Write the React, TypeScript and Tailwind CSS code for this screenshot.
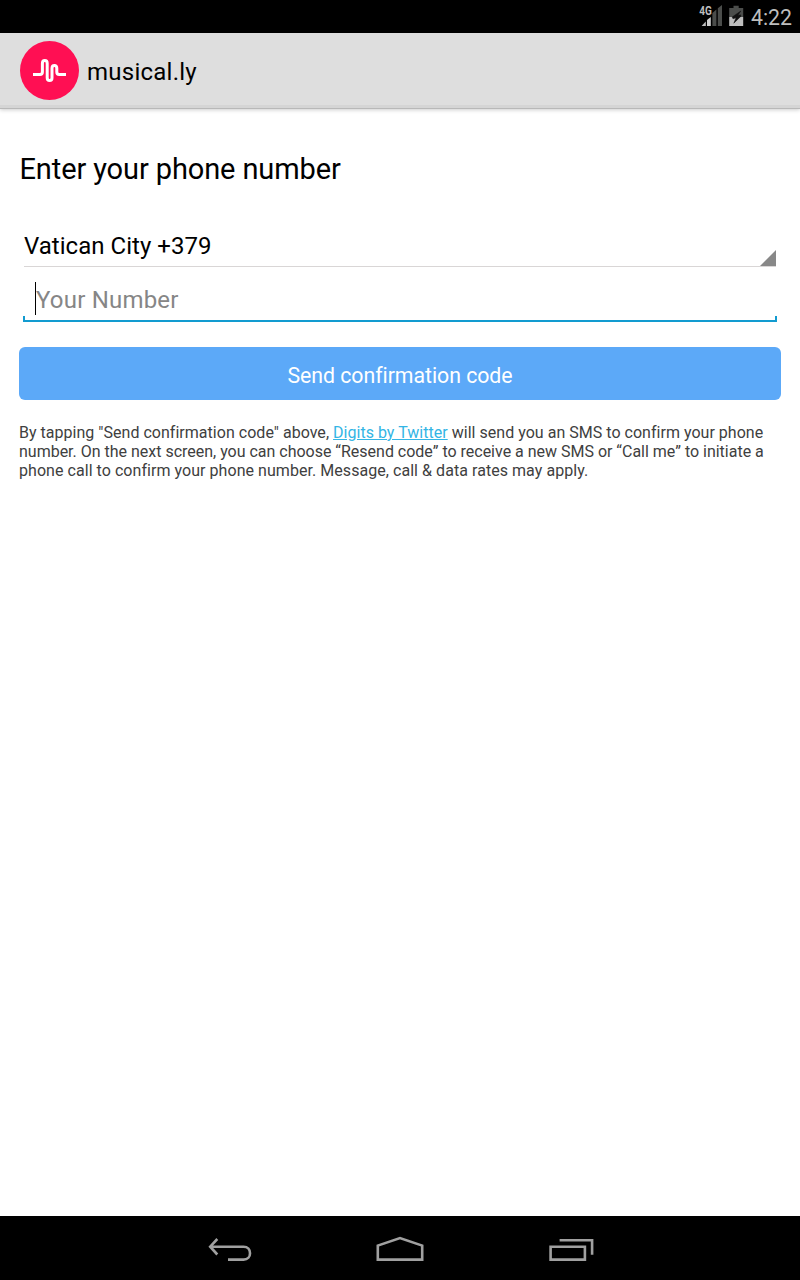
function StatusBar() {
  return (
    <div className="flex h-[33px] shrink-0 items-start justify-end bg-black pr-2">
      <svg className="h-[33px] w-[46px]" viewBox="698 0 46 33" fill="none">
        <path d="M717.8 8.2 722 5V26H717.8Z" fill="#4b4d4b" />
        <path d="M712.4 13 716.4 9.5V26H712.4Z" fill="#4b4d4b" />
        <path d="M707 20 710.8 17V26H707Z" fill="#d0d0d0" />
        <path d="M701.6 26 705.8 21.5V26Z" fill="#bebebe" />
        <text x="699.2" y="15.2" fill="#bebebe" fontSize="13" fontWeight="700" fontFamily="Roboto, sans-serif" textLength="12.6" lengthAdjust="spacingAndGlyphs">4G</text>
        <path d="M733.5 5.7H738.7V8H743.2V17H729.2V8H733.5Z" fill="#4b4d4b" />
        <path d="M729.2 17H743.2V26H729.2Z" fill="#bebebe" />
        <path d="M740.8 11 732.2 17 733 18.8 736 17.8 733.8 23.2 741 16.2 740.4 14.8 737.8 15.6Z" fill="#111" stroke="#111" strokeWidth="0.5" />
      </svg>
      <span className="ml-[7px] mt-[2px] text-[21.3px] leading-[31px] text-[#bebebe]">4:22</span>
    </div>
  );
}

function AppHeader() {
  return (
    <header className="flex h-[76px] shrink-0 items-center border-b border-[#b8b8b8] bg-[#dedede] pl-5 shadow-[0_1px_4px_rgba(0,0,0,0.2),inset_0_-3px_0_#d5d5d5]">
      <svg className="size-[59px]" viewBox="20 41 59 59" fill="none">
        <circle cx="49.5" cy="70.5" r="29.5" fill="#ff0f53" />
        <path d="M33 74.5H40Q42.4 74.5 42.4 72V63.5Q42.4 60.6 44.8 60.6T47.2 63.5V77.7Q47.2 80.6 49.6 80.6T52 77.7V68.3Q52 65.4 54.4 65.4T56.8 68.3V72Q56.8 74.5 59.2 74.5H66" stroke="white" strokeWidth="3" />
      </svg>
      <h1 className="ml-2 pt-0.5 text-[24px] leading-8 tracking-[0.25px] text-black">musical.ly</h1>
    </header>
  );
}

function NavigationBar() {
  return (
    <nav className="flex h-16 shrink-0 justify-center bg-black">
      <svg className="h-16 w-[400px]" viewBox="200 1216 400 64" fill="none" stroke="#a0a0a0" strokeWidth="2.6">
        <path d="M217.3 1239 210.2 1246.7 217.3 1254.5M210.2 1246.7H243.5C252.2 1246.7 252.2 1259.6 243.5 1259.6H228" />
        <path d="M377.8 1259.6V1245.6L400 1238.1 422.2 1245.6V1259.6Z" />
        <path d="M550.6 1246.7H584.9V1259.6H550.6ZM559.6 1240.2H592.1V1254.8" />
      </svg>
    </nav>
  );
}

export default function App() {
  return (
    <div className="flex h-[1280px] w-[800px] flex-col bg-white font-[Roboto,sans-serif] antialiased">
      <StatusBar />
      <AppHeader />
      <main className="flex min-h-0 grow flex-col px-[19px] pt-10">
        <h2 className="pl-[0.5px] text-[29px] leading-10 tracking-[-0.11px] text-black">Enter your phone number</h2>
        <div className="mx-[5px] mt-9 flex h-[42px] items-end justify-between border-b border-[#d9d6d6]">
          <span className="pb-[4px] text-[24px] leading-8 tracking-[0.03px] text-black">Vatican City +379</span>
          <svg className="size-4" viewBox="0 0 16 16">
            <path d="M16 0V16H0Z" fill="#888" />
          </svg>
        </div>
        <div className="mx-[4px] flex h-[55px] flex-col justify-end">
          <div className="flex h-[34px] items-center pl-[12px]">
            <span className="-mt-px h-[33px] w-px shrink-0 bg-black" />
            <span className="pt-0.5 text-[24px] leading-8 tracking-[0.2px] text-[#868686]">Your Number</span>
          </div>
          <div className="h-[6px] border-x-2 border-b-2 border-[#129bd0]" />
        </div>
        <button className="mt-[25px] h-[53px] shrink-0 rounded-md bg-[#5ca9f8] pt-[4px] text-[21.3px] tracking-[-0.04px] text-white">Send confirmation code</button>
        <p className="mt-[23px] whitespace-nowrap text-[16px] leading-[19px] text-[#404040]">
          <span className="block tracking-[0.025px]">By tapping "Send confirmation code" above, <a className="text-[#33b5e5] underline">Digits by Twitter</a> will send you an SMS to confirm your phone</span>
          <span className="block tracking-[-0.01px]">number. On the next screen, you can choose “Resend code” to receive a new SMS or “Call me” to initiate a</span>
          <span className="block tracking-[0.05px]">phone call to confirm your phone number. Message, call &amp; data rates may apply.</span>
        </p>
      </main>
      <NavigationBar />
    </div>
  );
}
